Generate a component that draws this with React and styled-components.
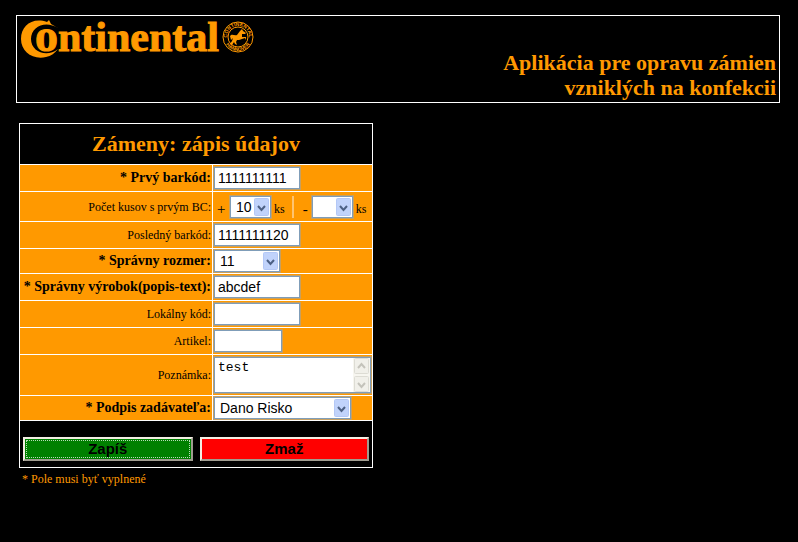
import React from 'react';
import styled, { createGlobalStyle, css } from 'styled-components';

const orange = '#ff9900';
const serif = '"Liberation Serif", "Times New Roman", serif';
const sans = '"Liberation Sans", Arial, sans-serif';

const GlobalStyle = createGlobalStyle`
  *, *::before, *::after { box-sizing: border-box; }
  html { background: #000; }
  body { margin: 0; background: #000; color: ${orange}; font-family: ${serif}; }
`;

const Page = styled.div`
  padding: 15px 18px 16px 16px;
`;

const Banner = styled.header`
  display: flex;
  justify-content: space-between;
  align-items: flex-start;
  min-height: 88px;
  border: 1px solid #fff;
  padding: 2px 3px;
`;

const Logo = styled.svg`
  display: block;
  flex: none;
  overflow: visible;
`;

const Wordmark = styled.text`
  font-family: ${serif};
  font-weight: bold;
  font-size: 42px;
`;

const RoundInitial = styled.tspan`
  font-size: 46px;
`;

const SealText = styled.text`
  font-family: ${sans};
  font-weight: bold;
  font-size: 5px;
`;

const AppTitle = styled.h1`
  align-self: flex-end;
  max-width: 300px;
  margin: 0;
  font-size: 22px;
  line-height: 25px;
  text-align: right;
`;

const Form = styled.form`
  width: fit-content;
  margin: 20px 0 0 3px;
`;

const Sheet = styled.div`
  display: grid;
  grid-template-columns: minmax(192px, max-content) minmax(159px, max-content);
  gap: 1px;
  border: 1px solid #fff;
  background: #fff;
`;

const FormTitle = styled.h2`
  grid-column: 1 / -1;
  display: flex;
  align-items: center;
  justify-content: center;
  min-height: 40px;
  margin: 0;
  background: #000;
  font-size: 22px;
  line-height: 26px;
`;

const Label = styled.label`
  display: flex;
  align-items: center;
  justify-content: flex-end;
  padding: 0 1px;
  background: ${orange};
  color: #000;
  font-size: ${(p) => (p.$required ? '14px' : '12px')};
  font-weight: ${(p) => (p.$required ? 'bold' : 'normal')};
  line-height: 18px;
  white-space: nowrap;
`;

const Cell = styled.div`
  display: flex;
  align-items: center;
  min-height: ${(p) => p.$height || 26}px;
  padding: 0 1px;
  background: ${orange};
  color: #000;
`;

const field = css`
  margin: 0;
  border: 1px solid #7f9db9;
  border-radius: 0;
  outline: 1px solid #c8a060;
  outline-offset: 0;
  background: #fff;
  color: #000;
`;

const TextInput = styled.input`
  ${field}
  width: ${(p) => p.$width || 86}px;
  height: 22px;
  padding: 0 3px;
  font-family: ${sans};
  font-size: 14px;
`;

const SelectBox = styled.span`
  position: relative;
  display: inline-flex;
`;

const Select = styled.select`
  ${field}
  appearance: none;
  width: ${(p) => p.$width}px;
  height: 22px;
  padding: 0 16px 0 5px;
  font-family: ${sans};
  font-size: 14px;
`;

const Arrow = styled.svg`
  position: absolute;
  top: 2px;
  right: 2px;
  pointer-events: none;
`;

const Pieces = styled.div`
  display: flex;
  align-items: center;
  padding-left: 3px;
  font-size: 12px;
  line-height: 18px;
`;

const Sign = styled.span`
  width: ${(p) => p.$width}px;
  padding-top: 4px;
  font-size: 15px;
`;

const Unit = styled.span`
  padding: 5px 0 0 3px;
`;

const Divider = styled.span`
  width: 2px;
  height: 22px;
  margin: 0 9px 0 7px;
  background: #ffc470;
`;

const NoteBox = styled.span`
  ${field}
  display: grid;
  grid-template-columns: minmax(0, 1fr) 17px;
  width: 157px;
  height: 36px;
`;

const Note = styled.textarea`
  width: 100%;
  height: 34px;
  margin: 0;
  padding: 2px 3px;
  border: 0;
  outline: 0;
  resize: none;
  overflow: hidden;
  background: transparent;
  color: #000;
  font-family: "Liberation Mono", "Courier New", monospace;
  font-size: 13px;
  line-height: 16px;
`;

const ScrollBar = styled.span`
  display: flex;
  flex-direction: column;
  justify-content: space-between;
  padding: 0 1px;
  background: #f7f6f0;
`;

const Actions = styled.div`
  grid-column: 1 / -1;
  display: flex;
  align-items: flex-end;
  gap: 7px;
  min-height: 46px;
  padding: 0 3px 6px;
  background: #000;
`;

const Button = styled.button`
  flex: 1;
  height: 24px;
  padding: 0;
  border: 2px solid;
  border-color: #f4efe4 #a09c90 #a09c90 #f4efe4;
  background: ${(p) => p.$color};
  color: #000;
  font-family: ${sans};
  font-size: 15px;
  font-weight: bold;
  line-height: 18px;
  ${(p) =>
    p.$focused &&
    css`
      outline: 1px dotted #b9dcb9;
      outline-offset: -4px;
    `}
`;

const Footnote = styled.p`
  margin: 2px 0 0 3px;
  font-size: 12px;
  line-height: 18px;
`;

function BrandLogo() {
  return (
    <Logo width="236" height="42" viewBox="0 0 236 42" fill={orange} role="img" aria-label="Continental">
      <path d="M38 10 L31 6 L29 2 L27 4 C12 -1 1 8 1 21 C1 34 13 42 26 39 C31 38 35 35 38 31 C27 40 11 34 11 21 C11 8 26 2 38 10 Z" />
      <Wordmark x="15" y="33" stroke={orange} strokeWidth="1">
        <RoundInitial>o</RoundInitial>ntinental
      </Wordmark>
      <g transform="translate(218 19)">
        <circle r="15" fill="none" stroke={orange} />
        <circle r="10" fill="none" stroke={orange} />
        <path id="sealTop" d="M-11 0 A11 11 0 0 1 11 0" fill="none" />
        <path id="sealBottom" d="M-14 0 A14 14 0 0 0 14 0" fill="none" />
        <SealText textAnchor="middle"><textPath href="#sealTop" startOffset="50%">CONTINENTAL</textPath></SealText>
        <SealText textAnchor="middle"><textPath href="#sealBottom" startOffset="50%">HANNOVER</textPath></SealText>
        <path d="M-8 -1 C-6 -4 -4 -1 -1 -2 L2 -6 L4 -8 L5 -6 L8 -4 L7 -3 L4 -3 L4 0 L8 0 L8 3 L7 1 L4 2 L1 3 L-1 3 L-2 5 L-1 8 L-3 7 L-4 5 L-6 8 L-8 7 L-6 4 L-5 1 L-7 3 Z" />
      </g>
    </Logo>
  );
}

function Chevron({ height = 18, muted, up }) {
  const mid = height / 2;
  const tip = up ? mid - 2 : mid + 3;
  const base = up ? mid + 2 : mid - 1;
  return (
    <>
      <rect x="0.5" y="0.5" width="14" height={height - 1} rx="1" fill={muted ? '#f1f0ea' : '#c1d3fb'} stroke={muted ? '#dddcd4' : '#b4c8f6'} />
      <path d={`M4 ${base} L7.5 ${tip} L11 ${base}`} fill="none" stroke={muted ? '#c4c3bb' : '#4d6185'} strokeWidth="2" />
    </>
  );
}

function DropDown({ id, width, options, label }) {
  return (
    <SelectBox>
      <Select id={id} $width={width} aria-label={label} defaultValue={options[0]}>
        {options.map((o) => (
          <option key={o} value={o}>{o}</option>
        ))}
      </Select>
      <Arrow width="15" height="18" aria-hidden="true"><Chevron /></Arrow>
    </SelectBox>
  );
}

export default function App() {
  return (
    <>
      <GlobalStyle />
      <Page>
        <Banner>
          <BrandLogo />
          <AppTitle>
            Aplikácia pre opravu zámien
            <br />
            vzniklých na konfekcii
          </AppTitle>
        </Banner>
        <Form onSubmit={(e) => e.preventDefault()}>
          <Sheet>
            <FormTitle>Zámeny: zápis údajov</FormTitle>

            <Label htmlFor="first" $required>* Prvý barkód:</Label>
            <Cell><TextInput id="first" defaultValue="1111111111" /></Cell>

            <Label htmlFor="plus">Počet kusov s prvým BC:</Label>
            <Cell $height={29}>
              <Pieces>
                <Sign $width={13}>+</Sign>
                <DropDown id="plus" width={41} options={['10']} />
                <Unit>ks</Unit>
                <Divider />
                <Sign $width={9}>-</Sign>
                <DropDown id="minus" width={41} options={['']} label="Počet kusov mínus" />
                <Unit>ks</Unit>
              </Pieces>
            </Cell>

            <Label htmlFor="last">Posledný barkód:</Label>
            <Cell><TextInput id="last" defaultValue="1111111120" /></Cell>

            <Label htmlFor="size" $required>* Správny rozmer:</Label>
            <Cell $height={24}><DropDown id="size" width={66} options={['11']} /></Cell>

            <Label htmlFor="product" $required>* Správny výrobok(popis-text):</Label>
            <Cell><TextInput id="product" defaultValue="abcdef" /></Cell>

            <Label htmlFor="local">Lokálny kód:</Label>
            <Cell><TextInput id="local" /></Cell>

            <Label htmlFor="article">Artikel:</Label>
            <Cell><TextInput id="article" $width={68} /></Cell>

            <Label htmlFor="note">Poznámka:</Label>
            <Cell $height={40}>
              <NoteBox>
                <Note id="note" defaultValue="test" />
                <ScrollBar aria-hidden="true">
                  <svg width="15" height="16"><Chevron height={16} muted up /></svg>
                  <svg width="15" height="16"><Chevron height={16} muted /></svg>
                </ScrollBar>
              </NoteBox>
            </Cell>

            <Label htmlFor="signature" $required>* Podpis zadávateľa:</Label>
            <Cell $height={24}><DropDown id="signature" width={137} options={['Dano Risko']} /></Cell>

            <Actions>
              <Button type="submit" $color="#008000" $focused>Zapíš</Button>
              <Button type="reset" $color="#ff0000">Zmaž</Button>
            </Actions>
          </Sheet>
          <Footnote>* Pole musi byť vyplnené</Footnote>
        </Form>
      </Page>
    </>
  );
}
